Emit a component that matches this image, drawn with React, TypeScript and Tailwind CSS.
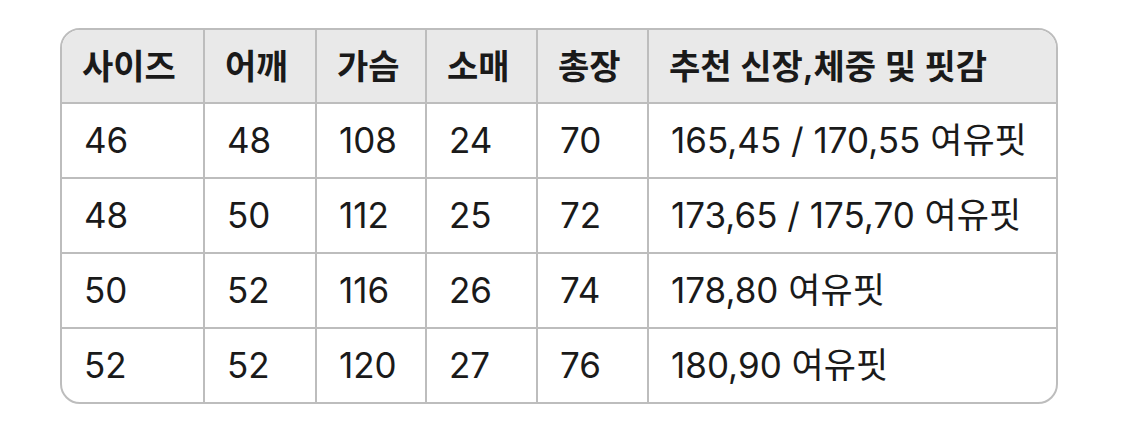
import React from "react";

const headers = ["사이즈", "어깨", "가슴", "소매", "총장", "추천 신장,체중 및 핏감"];
const rows = [
  ["46", "48", "108", "24", "70", "165,45 / 170,55 여유핏"],
  ["48", "50", "112", "25", "72", "173,65 / 175,70 여유핏"],
  ["50", "52", "116", "26", "74", "178,80 여유핏"],
  ["52", "52", "120", "27", "76", "180,90 여유핏"],
];

export default function App() {
  return (
    <div
      className="w-[1125px] h-[426px] bg-white pt-[28px] pl-[60px] text-[#1a1a1a]"
      style={{ fontFamily: 'Inter, "Noto Sans CJK KR", "Noto Sans", sans-serif' }}
    >
      <div className="w-[998px] border-2 border-[#bdbdbd] rounded-[20px] overflow-hidden">
        <div className="grid grid-cols-[141px_112px_110px_111px_111px_409px] h-[72px] bg-[#e9e9e9]">
          {headers.map((h, i) => (
            <div
              key={i}
              className={`flex items-center pl-[20px] text-[34px] font-semibold ${i > 0 ? "border-l-2 border-[#bdbdbd]" : ""}`}
            >
              {h}
            </div>
          ))}
        </div>
        {rows.map((r, ri) => (
          <div
            key={ri}
            className="grid grid-cols-[141px_112px_110px_111px_111px_409px] h-[75px] border-t-2 border-[#bdbdbd]"
          >
            {r.map((c, i) => (
              <div
                key={i}
                className={`flex items-center pl-[22px] text-[35px] ${i > 0 ? "border-l-2 border-[#bdbdbd]" : ""}`}
              >
                {c}
              </div>
            ))}
          </div>
        ))}
      </div>
    </div>
  );
}
